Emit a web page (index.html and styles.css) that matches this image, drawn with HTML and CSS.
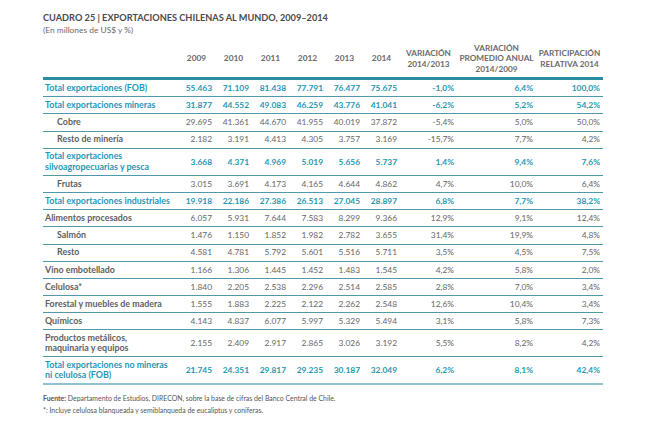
FILE: index.html
```html
<!DOCTYPE html>
<html lang="es">
<head>
<meta charset="utf-8">
<title>Cuadro 25</title>
<link rel="stylesheet" href="styles.css">
</head>
<body>
<div class="page">
  <h1 class="title">CUADRO 25 | EXPORTACIONES CHILENAS AL MUNDO, 2009–2014</h1>
  <p class="subtitle">(En millones de US$ y %)</p>
  <table class="tbl">
    <colgroup>
      <col class="c-label"><col class="c-year"><col class="c-year"><col class="c-year"><col class="c-year"><col class="c-year"><col class="c-year"><col class="c-var"><col class="c-prom"><col class="c-part">
    </colgroup>
    <thead>
      <tr>
        <th></th><th>2009</th><th>2010</th><th>2011</th><th>2012</th><th>2013</th><th>2014</th>
        <th class="hv">VARIACIÓN<br>2014/2013</th>
        <th class="hv">VARIACIÓN<br>PROMEDIO ANUAL<br>2014/2009</th>
        <th class="hv">PARTICIPACIÓN<br>RELATIVA 2014</th>
      </tr>
    </thead>
    <tbody>
      <tr class="tot"><td>Total exportaciones (FOB)</td><td>55.463</td><td>71.109</td><td>81.438</td><td>77.791</td><td>76.477</td><td>75.675</td><td>-1,0%</td><td>6,4%</td><td>100,0%</td></tr>
      <tr class="tot"><td>Total exportaciones mineras</td><td>31.877</td><td>44.552</td><td>49.083</td><td>46.259</td><td>43.776</td><td>41.041</td><td>-6,2%</td><td>5,2%</td><td>54,2%</td></tr>
      <tr class="sub"><td>Cobre</td><td>29.695</td><td>41.361</td><td>44.670</td><td>41.955</td><td>40.019</td><td>37.872</td><td>-5,4%</td><td>5,0%</td><td>50,0%</td></tr>
      <tr class="sub"><td>Resto de minería</td><td>2.182</td><td>3.191</td><td>4.413</td><td>4.305</td><td>3.757</td><td>3.169</td><td>-15,7%</td><td>7,7%</td><td>4,2%</td></tr>
      <tr class="tot two"><td>Total exportaciones<br>silvoagropecuarias y pesca</td><td>3.668</td><td>4.371</td><td>4.969</td><td>5.019</td><td>5.656</td><td>5.737</td><td>1,4%</td><td>9,4%</td><td>7,6%</td></tr>
      <tr class="sub"><td>Frutas</td><td>3.015</td><td>3.691</td><td>4.173</td><td>4.165</td><td>4.644</td><td>4.862</td><td>4,7%</td><td>10,0%</td><td>6,4%</td></tr>
      <tr class="tot"><td>Total exportaciones industriales</td><td>19.918</td><td>22.186</td><td>27.386</td><td>26.513</td><td>27.045</td><td>28.897</td><td>6,8%</td><td>7,7%</td><td>38,2%</td></tr>
      <tr class="item"><td>Alimentos procesados</td><td>6.057</td><td>5.931</td><td>7.644</td><td>7.583</td><td>8.299</td><td>9.366</td><td>12,9%</td><td>9,1%</td><td>12,4%</td></tr>
      <tr class="sub"><td>Salmón</td><td>1.476</td><td>1.150</td><td>1.852</td><td>1.982</td><td>2.782</td><td>3.655</td><td>31,4%</td><td>19,9%</td><td>4,8%</td></tr>
      <tr class="sub"><td>Resto</td><td>4.581</td><td>4.781</td><td>5.792</td><td>5.601</td><td>5.516</td><td>5.711</td><td>3,5%</td><td>4,5%</td><td>7,5%</td></tr>
      <tr class="item"><td>Vino embotellado</td><td>1.166</td><td>1.306</td><td>1.445</td><td>1.452</td><td>1.483</td><td>1.545</td><td>4,2%</td><td>5,8%</td><td>2,0%</td></tr>
      <tr class="item"><td>Celulosa*</td><td>1.840</td><td>2.205</td><td>2.538</td><td>2.296</td><td>2.514</td><td>2.585</td><td>2,8%</td><td>7,0%</td><td>3,4%</td></tr>
      <tr class="item"><td>Forestal y muebles de madera</td><td>1.555</td><td>1.883</td><td>2.225</td><td>2.122</td><td>2.262</td><td>2.548</td><td>12,6%</td><td>10,4%</td><td>3,4%</td></tr>
      <tr class="item"><td>Químicos</td><td>4.143</td><td>4.837</td><td>6.077</td><td>5.997</td><td>5.329</td><td>5.494</td><td>3,1%</td><td>5,8%</td><td>7,3%</td></tr>
      <tr class="item two"><td>Productos metálicos,<br>maquinaria y equipos</td><td>2.155</td><td>2.409</td><td>2.917</td><td>2.865</td><td>3.026</td><td>3.192</td><td>5,5%</td><td>8,2%</td><td>4,2%</td></tr>
      <tr class="tot two last"><td>Total exportaciones no mineras<br>ni celulosa (FOB)</td><td>21.745</td><td>24.351</td><td>29.817</td><td>29.235</td><td>30.187</td><td>32.049</td><td>6,2%</td><td>8,1%</td><td>42,4%</td></tr>
    </tbody>
  </table>
  <p class="note"><b>Fuente:</b> Departamento de Estudios, DIRECON, sobre la base de cifras del Banco Central de Chile.</p>
  <p class="note">*: Incluye celulosa blanqueada y semiblanqueda de eucaliptus y coníferas.</p>
</div>
</body>
</html>
```
FILE: styles.css
```css
html, body {
  margin: 0;
  padding: 0;
  background: #ffffff;
}
.page {
  padding: 12px 0 0 43px;
  font-family: Lato, "Open Sans", sans-serif;
  color: #666;
}
.title {
  margin: 0;
  font-size: 9.2px;
  line-height: 12px;
  font-weight: 700;
  color: #4a4a4a;
}
.subtitle {
  margin: 1px 0 0;
  font-size: 8.4px;
  line-height: 11px;
  color: #6a6a6a;
}
.tbl {
  border-collapse: collapse;
  table-layout: fixed;
  width: 560px;
  margin-top: 4px;
  font-size: 8.4px;
}
.c-label { width: 135px; }
.c-year { width: 37px; }
.c-var { width: 57px; }
.c-prom { width: 79px; }
.c-part { width: 67px; }
.tbl th {
  height: 37px;
  padding: 0;
  font-weight: 700;
  color: #6a6a6a;
  text-align: center;
  vertical-align: middle;
  border-bottom: 3px solid #2b8ba1;
  line-height: 10.5px;
}
.tbl th.hv {
  font-size: 8.2px;
}
.tbl td {
  height: 16.2px;
  padding: 0 3px 0 0;
  text-align: right;
  vertical-align: middle;
  line-height: 10.5px;
  border-bottom: 1px solid #5298ab;
  white-space: nowrap;
}
.tbl td:first-child {
  text-align: left;
  padding-left: 2px;
  font-size: 8.9px;
}
.tbl tr.two td {
  height: 26px;
}
.tot td {
  color: #1f97b3;
  font-weight: 700;
}
.item td {
  color: #666;
}
.item td:first-child {
  font-weight: 700;
  color: #5e5e5e;
}
.sub td {
  color: #666;
}
.sub td:first-child {
  padding-left: 14px;
  font-weight: 700;
  color: #5e5e5e;
}
.tbl tr.last td {
  border-bottom: 2px solid #8ec4d0;
}
.note {
  margin: 0;
  font-size: 6.9px;
  line-height: 12px;
  color: #555;
}
.tbl + .note {
  margin-top: 7px;
}
.note b {
  font-weight: 700;
}
```
